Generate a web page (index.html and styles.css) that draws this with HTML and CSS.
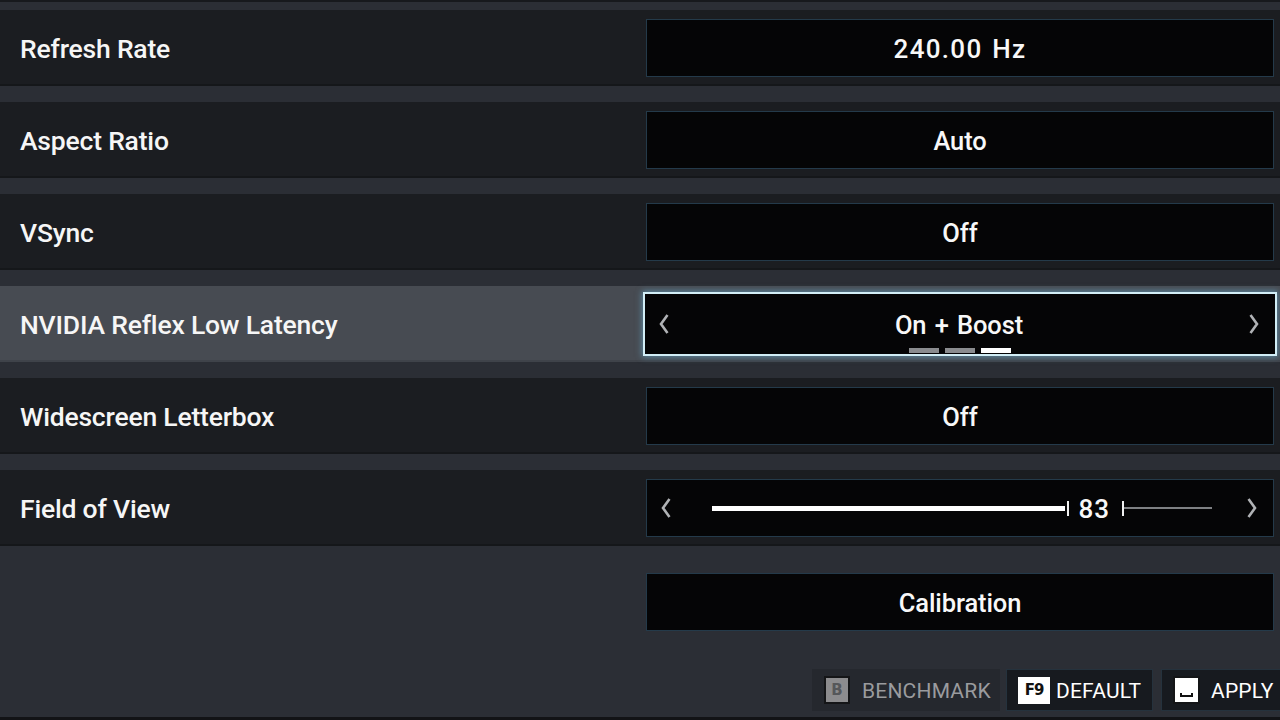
FILE: index.html
```html
<!DOCTYPE html>
<html>
<head>
<meta charset="utf-8">
<link rel="stylesheet" href="styles.css">
</head>
<body>
<div class="page">
  <div class="list">
    <div class="row">
      <div class="label">Refresh Rate</div>
      <div class="control"><span class="value digits">240.00 Hz</span></div>
    </div>
    <div class="row">
      <div class="label">Aspect Ratio</div>
      <div class="control"><span class="value">Auto</span></div>
    </div>
    <div class="row">
      <div class="label">VSync</div>
      <div class="control"><span class="value">Off</span></div>
    </div>
    <div class="row active">
      <div class="label">NVIDIA Reflex Low Latency</div>
      <div class="control focused">
        <svg class="arrow" width="12" height="22" viewBox="0 0 12 22"><path d="M9.5 2 L3 11 L9.5 20"/></svg>
        <span class="value">On + Boost</span>
        <svg class="arrow" width="12" height="22" viewBox="0 0 12 22"><path d="M2.5 2 L9 11 L2.5 20"/></svg>
        <div class="pips">
          <span class="pip"></span><span class="pip"></span><span class="pip on"></span>
        </div>
      </div>
    </div>
    <div class="row">
      <div class="label">Widescreen Letterbox</div>
      <div class="control"><span class="value">Off</span></div>
    </div>
    <div class="row">
      <div class="label">Field of View</div>
      <div class="control slider">
        <svg class="arrow" width="12" height="22" viewBox="0 0 12 22"><path d="M9.5 2 L3 11 L9.5 20"/></svg>
        <div class="track">
          <div class="fill" style="width:353px"></div>
          <span class="tick"></span>
          <span class="num">83</span>
          <span class="tick"></span>
          <div class="rest"></div>
        </div>
        <svg class="arrow" width="12" height="22" viewBox="0 0 12 22"><path d="M2.5 2 L9 11 L2.5 20"/></svg>
      </div>
    </div>
    <div class="row plain">
      <div class="label"></div>
      <div class="control"><span class="value">Calibration</span></div>
    </div>
  </div>
  <div class="footer">
    <div class="btn dim">
      <span class="key key-b">B</span>
      <span class="btn-text">BENCHMARK</span>
    </div>
    <div class="btn outlined">
      <span class="key key-f9">F9</span>
      <span class="btn-text">DEFAULT</span>
    </div>
    <div class="btn apply">
      <span class="key key-space"><span class="space-mark"></span></span>
      <span class="btn-text">APPLY</span>
    </div>
  </div>
</div>
</body>
</html>
```
FILE: styles.css
```css
* { box-sizing: border-box; }
html, body {
  margin: 0;
  padding: 0;
}
body {
  width: 1280px;
  height: 720px;
  overflow: hidden;
  background: #2b2e35;
  font-family: Roboto, "Liberation Sans", sans-serif;
  color: #f4f4f4;
}
.page {
  height: 720px;
  border-top: 2px solid #17191d;
  padding-top: 8px;
  display: flex;
  flex-direction: column;
  border-bottom: 3px solid #121316;
}
.list {
  display: flex;
  flex-direction: column;
  gap: 16px;
}
.row {
  height: 76px;
  background: #1b1d21;
  border-bottom: 2px solid #15171a;
  display: flex;
  align-items: center;
  justify-content: space-between;
  padding-left: 20px;
  padding-right: 6px;
}
.row.active {
  background: #474b52;
  border-bottom-color: #3f434a;
  padding-right: 3px;
}
.row.plain {
  background: transparent;
  border-bottom-color: transparent;
  padding-top: 4px;
}
.label {
  font-size: 26.5px;
  font-weight: 500;
  letter-spacing: -0.2px;
  color: #f6f6f6;
  padding-top: 2px;
}
.control {
  position: relative;
  width: 628px;
  height: 58px;
  margin-top: 2px;
  background: #050506;
  border: 1px solid #243a4a;
  display: flex;
  align-items: center;
  justify-content: center;
}
.value {
  font-size: 25.5px;
  font-weight: 500;
  letter-spacing: -0.1px;
  word-spacing: 2px;
  color: #f8f8f8;
  padding-top: 2px;
}
.value.digits {
  font-size: 26px;
  letter-spacing: 1.3px;
}
.control.focused {
  width: 634px;
  height: 64px;
  margin-top: 2px;
  border: 2px solid #d2eef6;
  box-shadow: 0 0 6px 1px rgba(110, 190, 225, 0.55);
  justify-content: space-between;
  padding: 0 15px 0 13px;
}
.arrow path {
  fill: none;
  stroke: #b0b2b5;
  stroke-width: 2.6;
}
.pips {
  position: absolute;
  left: 50%;
  bottom: 1px;
  transform: translateX(-50%);
  display: flex;
  gap: 6px;
}
.pip {
  width: 30px;
  height: 5px;
  background: #8a8c8f;
}
.pip.on { background: #ffffff; }

.control.slider {
  justify-content: flex-start;
  padding: 0 15px 0 13px;
}
.track {
  display: flex;
  align-items: center;
  margin-left: 40px;
  width: 500px;
}
.fill {
  height: 5px;
  background: #ffffff;
}
.tick {
  width: 2px;
  height: 15px;
  background: #f0f0f0;
  margin-left: 2px;
}
.num {
  font-size: 26px;
  font-weight: 500;
  letter-spacing: 1px;
  margin: 0 10px;
  padding-top: 2px;
  color: #f8f8f8;
}
.rest {
  width: 88px;
  height: 2px;
  background: #7e8083;
}
.track + .arrow { margin-left: auto; }

.footer {
  margin-top: auto;
  margin-bottom: 6px;
  display: flex;
  justify-content: flex-end;
  align-items: stretch;
  height: 42px;
}
.btn {
  display: flex;
  align-items: center;
  background: #22252b;
  height: 42px;
}
.btn.dim {
  width: 188px;
  padding-left: 12px;
  gap: 12px;
  background: #25282e;
  margin-right: 6px;
}
.btn.outlined {
  width: 147px;
  padding-left: 11px;
  gap: 6px;
  background: #171a1f;
  border: 1px solid #25323d;
  margin-right: 8px;
}
.btn.apply {
  width: 119px;
  padding-left: 11px;
  gap: 11px;
  background: #171a1f;
  border: 1px solid #25323d;
  border-right: none;
}
.btn-text {
  font-size: 21px;
  font-weight: 400;
  color: #ffffff;
  letter-spacing: 0.2px;
  padding-top: 2px;
}
.btn.dim .btn-text { color: #9a9b9e; }
.key {
  display: flex;
  align-items: center;
  justify-content: center;
  height: 28px;
  font-family: "DejaVu Sans", sans-serif;
  font-weight: bold;
}
.key-b {
  width: 26px;
  background: #8c8c8e;
  border: 2px solid #141517;
  color: #55575a;
  font-size: 15px;
}
.key-f9 {
  width: 32px;
  height: 27px;
  background: #ffffff;
  color: #111111;
  font-size: 15px;
  letter-spacing: -1px;
}
.key-space {
  width: 27px;
  background: #ffffff;
  border: 2px solid #141517;
  align-items: flex-end;
  padding-bottom: 5px;
}
.space-mark {
  width: 13px;
  height: 4px;
  border: 2px solid #111111;
  border-top: none;
}
```
